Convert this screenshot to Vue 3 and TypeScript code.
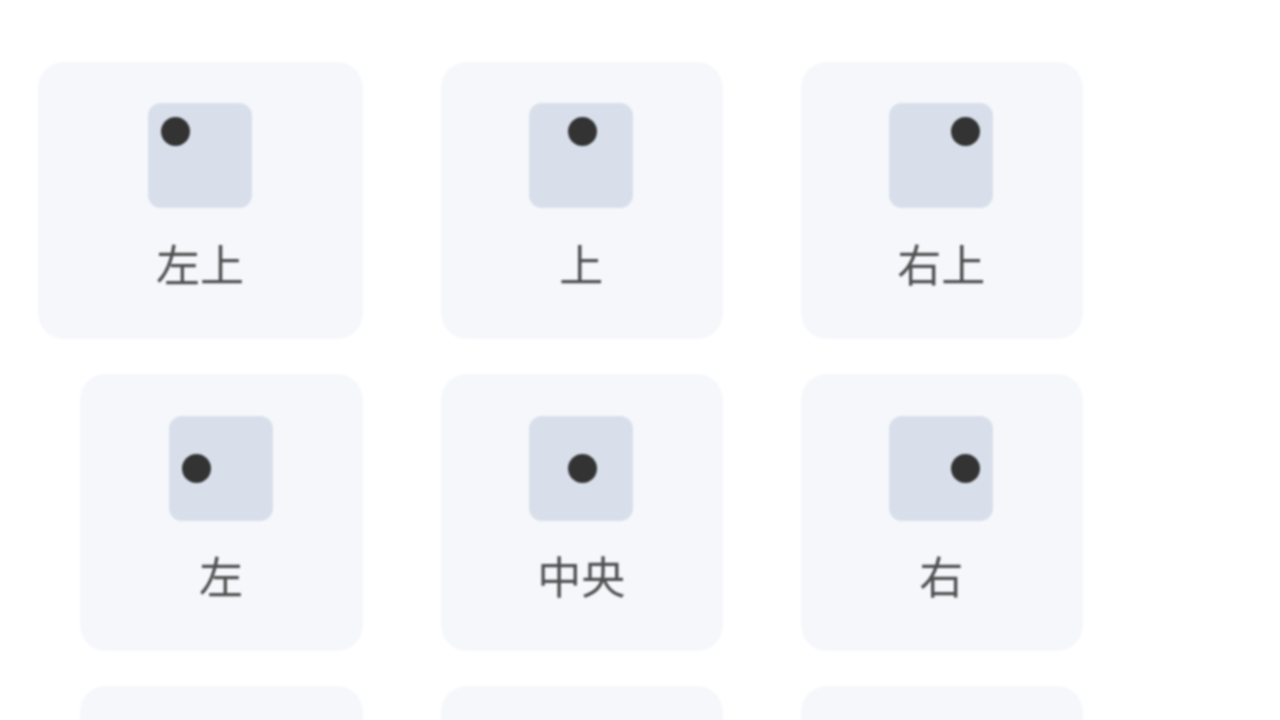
<script setup lang="ts">
interface Cell { id: string; label?: string; h?: string; v?: string; wide?: boolean }
const rows: Cell[][] = [
  [
    { id: 'tl', label: '左上', h: 'start', v: 'start', wide: true },
    { id: 't', label: '上', h: 'center', v: 'start' },
    { id: 'tr', label: '右上', h: 'end', v: 'start' },
  ],
  [
    { id: 'l', label: '左', h: 'start', v: 'center' },
    { id: 'c', label: '中央', h: 'center', v: 'center' },
    { id: 'r', label: '右', h: 'end', v: 'center' },
  ],
  [{ id: 'bl' }, { id: 'b' }, { id: 'br' }],
]
</script>

<template>
  <div class="page">
    <div class="rows">
      <div v-for="(row, r) in rows" :key="r" class="row">
        <div v-for="cell in row" :key="cell.id" class="card" :class="{ wide: cell.wide }">
          <template v-if="cell.label">
            <div class="icon" :class="['h-' + cell.h, 'v-' + cell.v]">
              <span class="dot"></span>
            </div>
            <div class="label">{{ cell.label }}</div>
          </template>
        </div>
      </div>
    </div>
  </div>
</template>

<style scoped>
.page {
  width: 1280px;
  height: 720px;
  overflow: hidden;
  background: #ffffff;
  font-family: "Noto Sans CJK SC", "Noto Sans", sans-serif;
}
.rows {
  width: 1083px;
  padding-top: 61.6px;
  display: flex;
  flex-direction: column;
  gap: 35.4px;
  filter: blur(0.8px);
}
.row {
  display: flex;
  justify-content: flex-end;
  gap: 77.5px;
}
.card {
  width: 282.5px;
  height: 277px;
  box-sizing: border-box;
  padding-top: 41.7px;
  border-radius: 26px;
  background: #f5f7fb;
  display: flex;
  flex-direction: column;
  align-items: center;
}
.card:first-child {
  width: 283px;
}
.card.wide {
  width: 325px;
}
.icon {
  width: 104px;
  height: 105px;
  margin-right: 1px;
  box-sizing: border-box;
  padding: 13.5px 13.5px 13.5px 13px;
  border-radius: 13px;
  background: #d8dfeb;
  display: flex;
}
.h-start { justify-content: flex-start; }
.h-center { justify-content: center; }
.h-center .dot { margin-left: 3px; }
.h-end { justify-content: flex-end; }
.v-start { align-items: flex-start; }
.v-center { align-items: center; }
.v-end { align-items: flex-end; }
.v-center .dot { margin-top: 1px; }
.dot {
  width: 29px;
  height: 29px;
  border-radius: 50%;
  background: #333333;
}
.label {
  margin-top: 22.3px;
  margin-right: 1px;
  font-size: 44px;
  line-height: 64px;
  color: #505050;
}
</style>
